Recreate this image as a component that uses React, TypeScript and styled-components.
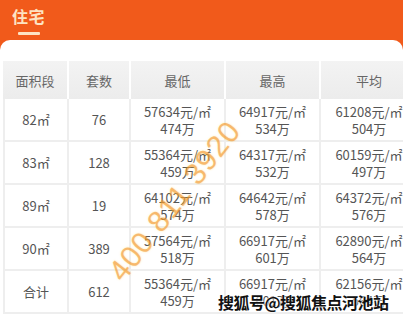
import React from "react"
import styled, {createGlobalStyle} from "styled-components";

const GlobalStyle = createGlobalStyle`
    html, body {
        margin: 0;
        padding: 0;
        background: #ffffff;
        font-family: "Noto Sans CJK SC", "Liberation Sans", sans-serif;
    }
    body {
        width: 403px;
        height: 321px;
        overflow: hidden;
    }
`

interface Row {
    area: string;
    count: string;
    low: [string, string];
    high: [string, string];
    avg: [string, string];
}

const rows: Row[] = [
    {area: '82㎡', count: '76', low: ['57634元/㎡', '474万'], high: ['64917元/㎡', '534万'], avg: ['61208元/㎡', '504万']},
    {area: '83㎡', count: '128', low: ['55364元/㎡', '459万'], high: ['64317元/㎡', '532万'], avg: ['60159元/㎡', '497万']},
    {area: '89㎡', count: '19', low: ['64102元/㎡', '574万'], high: ['64642元/㎡', '578万'], avg: ['64372元/㎡', '576万']},
    {area: '90㎡', count: '389', low: ['57564元/㎡', '518万'], high: ['66917元/㎡', '601万'], avg: ['62890元/㎡', '564万']},
    {area: '合计', count: '612', low: ['55364元/㎡', '459万'], high: ['66917元/㎡', '601万'], avg: ['62156元/㎡', '564万']},
];

const Page = styled.div`
    position: relative;
    width: 403px;
    height: 321px;
    overflow: hidden;
    background: #f15a1b;
`
const TopBar = styled.div`
    height: 40px;
    padding-left: 12px;
    display: flex;
    flex-direction: column;
`
const Title = styled.div`
    margin-top: 6px;
    font-size: 16px;
    font-weight: 700;
    color: #fde3c4;
    letter-spacing: 0.5px;
    line-height: 20px;
`
const TitleBar = styled.div`
    width: 22px;
    height: 3px;
    margin: 6px 0 0 6px;
    background: #fde3c4;
    border-radius: 1px;
`
const Card = styled.div`
    background: #ffffff;
    border-radius: 10px 10px 0 0;
    padding: 21px 0 0 3px;
    height: 300px;
`
const Table = styled.table`
    border-collapse: separate;
    border-spacing: 0;
    table-layout: fixed;
    width: 406px;
    color: #555555;
    font-size: 13px;
`
const Head = styled.th<{$w: number}>`
    width: ${p => p.$w}px;
    height: 38px;
    padding: 0;
    background: linear-gradient(#f3f3f3, #ececec);
    border-right: 2px solid #ffffff;
    font-weight: 400;
    color: #666666;
    font-size: 13px;
`
const Cell = styled.td<{$first?: boolean}>`
    height: 41px;
    padding: 0;
    text-align: center;
    line-height: 17px;
    border-right: 2px solid #eeeeee;
    border-bottom: 2px solid #eeeeee;
    border-left: ${p => p.$first ? '2px solid #eeeeee' : 'none'};
`
const Mark = styled.div`
    position: absolute;
    left: 78px;
    top: 184px;
    transform: rotate(-52deg);
    font-family: "Liberation Sans", sans-serif;
    font-size: 30px;
    letter-spacing: 1px;
    color: rgba(240, 130, 30, 0.5);
    text-shadow: 0 0 2px rgba(255, 220, 80, 0.5);
    white-space: nowrap;
    pointer-events: none;
`
const Sohu = styled.div`
    position: absolute;
    left: 218px;
    top: 290px;
    font-size: 16px;
    font-weight: 700;
    color: #111111;
    letter-spacing: -0.5px;
    text-shadow: 0 0 2px #ffffff, 0 0 2px #ffffff;
    white-space: nowrap;
`

const Price: React.FC<{v: [string, string]}> = ({v}) => (
    <>
        {v[0]}<br/>{v[1]}
    </>
)

const App: React.FC = () => {
    return (
        <Page>
            <GlobalStyle/>
            <TopBar>
                <Title>住宅</Title>
                <TitleBar/>
            </TopBar>
            <Card>
                <Table>
                    <thead>
                    <tr>
                        <Head $w={64}>面积段</Head>
                        <Head $w={60}>套数</Head>
                        <Head $w={93}>最低</Head>
                        <Head $w={93}>最高</Head>
                        <Head $w={96}>平均</Head>
                    </tr>
                    </thead>
                    <tbody>
                    {rows.map(r => (
                        <tr key={r.area}>
                            <Cell $first>{r.area}</Cell>
                            <Cell>{r.count}</Cell>
                            <Cell><Price v={r.low}/></Cell>
                            <Cell><Price v={r.high}/></Cell>
                            <Cell><Price v={r.avg}/></Cell>
                        </tr>
                    ))}
                    </tbody>
                </Table>
            </Card>
            <Mark>400 811 3920</Mark>
            <Sohu>搜狐号@搜狐焦点河池站</Sohu>
        </Page>
    )
}
export default App;
